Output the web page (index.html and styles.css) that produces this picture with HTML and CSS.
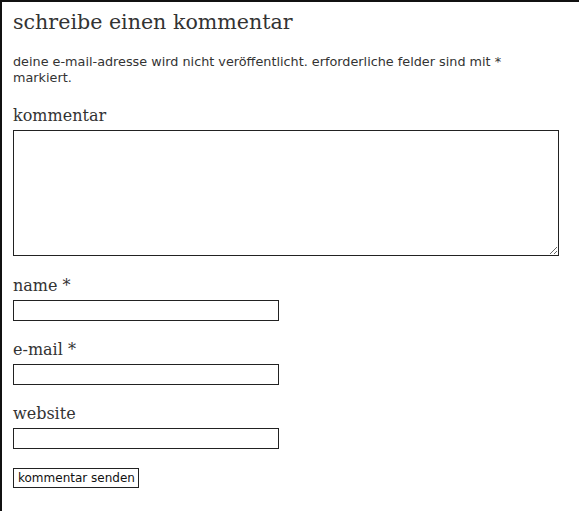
FILE: index.html
```html
<!DOCTYPE html>
<html lang="de">
<head>
<meta charset="utf-8">
<title>Kommentar</title>
<link rel="stylesheet" href="styles.css">
</head>
<body>
<div class="respond">
  <h3 class="reply-title">schreibe einen kommentar</h3>
  <form class="comment-form">
    <p class="comment-notes">deine e-mail-adresse wird nicht veröffentlicht. erforderliche felder sind mit * markiert.</p>
    <p class="field field-comment">
      <label class="label" for="comment">kommentar</label>
      <textarea id="comment" class="textarea"></textarea>
    </p>
    <p class="field">
      <label class="label" for="author">name <span class="required">*</span></label>
      <input id="author" class="input" type="text">
    </p>
    <p class="field">
      <label class="label" for="email">e-mail <span class="required">*</span></label>
      <input id="email" class="input" type="text">
    </p>
    <p class="field">
      <label class="label" for="url">website</label>
      <input id="url" class="input" type="text">
    </p>
    <p class="submit-row">
      <button type="button" class="submit">kommentar senden</button>
    </p>
  </form>
</div>
</body>
</html>
```
FILE: styles.css
```css
html, body {
  margin: 0;
  padding: 0;
  background: #fff;
}
body {
  color: #333;
  font-family: "DejaVu Sans", sans-serif;
}
.respond {
  border-top: 2px solid #111;
  border-left: 2px solid #111;
  padding: 6px 20px 20px 11px;
  min-height: 511px;
  box-sizing: border-box;
}
.reply-title {
  margin: 0;
  font-family: "DejaVu Serif", serif;
  font-weight: normal;
  font-size: 20.6px;
  line-height: 28px;
  color: #333;
}
.comment-form {
  display: flex;
  flex-direction: column;
}
.comment-notes {
  margin: 18px 0 0 0;
  font-size: 12.8px;
  line-height: 16px;
  color: #333;
}
.field {
  margin: 15px 0 0 0;
  display: flex;
  flex-direction: column;
  align-items: flex-start;
}
.field-comment {
  margin-top: 16px;
  margin-bottom: 1px;
}
.label {
  font-family: "DejaVu Serif", serif;
  font-size: 16px;
  line-height: 26px;
  color: #333;
  margin-top: 1px;
  margin-bottom: 1px;
}
.required {
  font-size: 16px;
}
.textarea {
  box-sizing: border-box;
  width: 546px;
  height: 126px;
  border: 1px solid #222;
  margin: 0;
  padding: 2px;
}
.input {
  box-sizing: border-box;
  width: 266px;
  height: 21px;
  border: 1px solid #222;
  margin: 0;
  padding: 1px 2px;
}
.submit-row {
  margin: 18px 0 0 0;
}
.submit {
  font-family: "DejaVu Sans", sans-serif;
  font-size: 12px;
  color: #111;
  background: #fff;
  border: 1px solid #222;
  padding: 1px 3px 1px 4px;
  height: 20px;
  margin: 0;
}
```
